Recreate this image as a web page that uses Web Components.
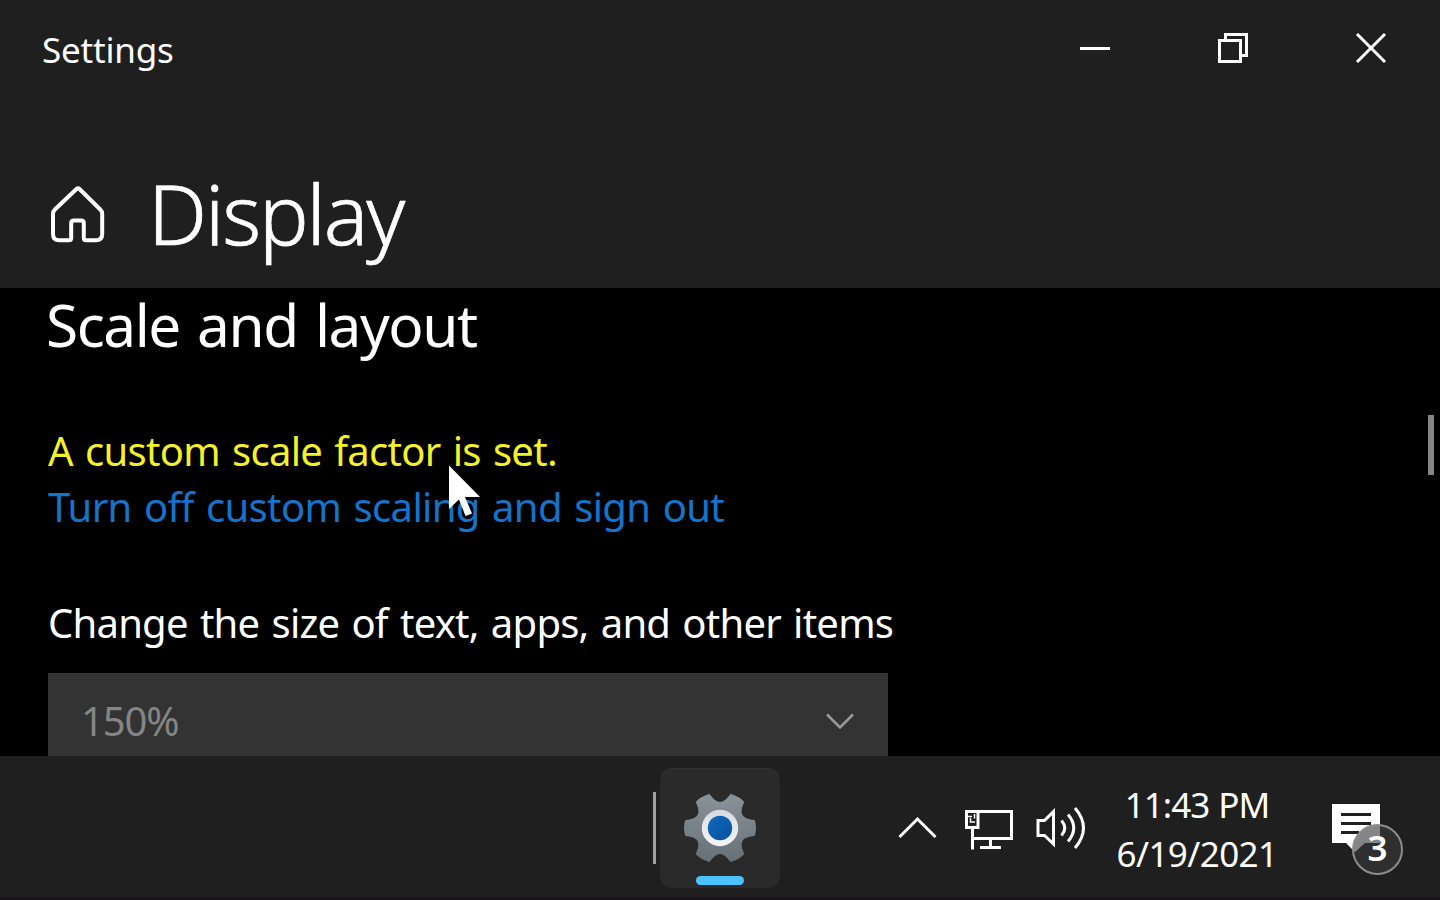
<!DOCTYPE html>
<html lang="en">
<head>
<meta charset="utf-8">
<title>Settings</title>
<style>
    html, body {
        margin: 0;
        height: 100%;
        overflow: hidden;
        background: #000;
    }

    body {
        font-family: "Noto Sans", "Open Sans", sans-serif;
        color: #fff;
        --chrome-color: #1f1f1f;
        --link-color: #1474cc;
        --warn-color: #f5f129;
    }
</style>
</head>
<body>
<settings-window>
    <title-bar slot="title">Settings</title-bar>
    <page-header slot="header">Display</page-header>
    <section-title>Scale and layout</section-title>
    <scale-notice>
        A custom scale factor is set.
        <span slot="link">Turn off custom scaling and sign out</span>
    </scale-notice>
    <select-field value="150%">Change the size of text, apps, and other items</select-field>
    <task-bar slot="taskbar">
        <task-button></task-button>
        <tray-icons slot="tray"></tray-icons>
        <tray-clock slot="tray" time="11:43 PM" date="6/19/2021"></tray-clock>
        <tray-messages slot="tray" count="3"></tray-messages>
    </task-bar>
</settings-window>
<mouse-pointer></mouse-pointer>

<script>
class SettingsWindow extends HTMLElement
{
    constructor()
    {
        super();
        const Shadow = this.attachShadow({mode: "open"});
        Shadow.innerHTML = `
        <slot name="title"></slot>
        <slot name="header"></slot>
        <div class="Content">
            <main><slot></slot></main>
            <div class="Scroll"><div class="Thumb"></div></div>
        </div>
        <slot name="taskbar"></slot>
        <style>
            :host {
                display: flex;
                flex-direction: column;
                width: 1440px;
                height: 900px;
            }

            .Content {
                display: flex;
                height: 468px;
                overflow: hidden;
                background: #000;
            }

            main {
                flex: 1;
                padding: 0 0 0 48px;
            }

            .Scroll {
                width: 12px;
                padding-top: 127px;
            }

            .Thumb {
                width: 6px;
                height: 60px;
                background: #858585;
            }
        </style>
        `;
    }
}

class TitleBar extends HTMLElement
{
    constructor()
    {
        super();
        const Shadow = this.attachShadow({mode: "open"});
        Shadow.innerHTML = `
        <span class="Caption"><slot></slot></span>
        <svg viewBox="0 0 138 96"><path d="M57 48.500h30"/></svg>
        <svg viewBox="0 0 138 96"><path d="M58.500 40.500h21v21h-21zM64.500 40.500v-6h21v21h-6"/></svg>
        <svg viewBox="0 0 138 96"><path d="M58 34l28 28M86 34l-28 28"/></svg>
        <style>
            :host {
                display: flex;
                box-sizing: border-box;
                height: 96px;
                padding-right: 3px;
                background: var(--chrome-color);
            }

            .Caption {
                flex: 1;
                padding: 26px 0 0 42px;
                font-size: 35px;
                line-height: 48px;
                letter-spacing: -.2px;
            }

            svg {
                width: 138px;
                height: 96px;
                fill: none;
                stroke: #fff;
                stroke-width: 3;
            }
        </style>
        `;
    }
}

class PageHeader extends HTMLElement
{
    constructor()
    {
        super();
        const Shadow = this.attachShadow({mode: "open"});
        Shadow.innerHTML = `
        <svg viewBox="0 0 58 60">
            <path d="M26.500 5 4.900 25.500Q3 27.300 3 30V50Q3 56.200 9 56.200H19Q21.200 56.200 21.200 54V39Q21.200 36.500 23.700 36.500H31.300Q33.800 36.500 33.800 39V54Q33.800 56.200 36 56.200H46Q52.200 56.200 52.200 50V30Q52.200 27.300 50.300 25.500L29.500 5Q28 3.500 26.500 5Z"/>
        </svg>
        <h1><slot></slot></h1>
        <style>
            :host {
                display: flex;
                height: 192px;
                background: var(--chrome-color);
            }

            svg {
                width: 58px;
                height: 60px;
                margin: 88px 0 0 50px;
                fill: none;
                stroke: #fff;
                stroke-width: 4;
            }

            h1 {
                margin: 57px 0 0 40px;
                font-size: 83px;
                font-weight: 300;
                line-height: 120px;
                letter-spacing: -2.1px;
                -webkit-text-stroke: .7px #fff;
            }
        </style>
        `;
    }
}

class SectionTitle extends HTMLElement
{
    constructor()
    {
        super();
        const Shadow = this.attachShadow({mode: "open"});
        Shadow.innerHTML = `
        <h2><slot></slot></h2>
        <style>
            :host {
                display: block;
            }

            h2 {
                margin: 0 0 0 -2px;
                font-size: 58.5px;
                font-weight: 400;
                line-height: 72px;
                letter-spacing: -1.45px;
                word-spacing: 3.5px;
            }
        </style>
        `;
    }
}

class ScaleNotice extends HTMLElement
{
    constructor()
    {
        super();
        const Shadow = this.attachShadow({mode: "open"});
        Shadow.innerHTML = `
        <div class="Warn"><slot></slot></div>
        <div class="Link"><slot name="link"></slot></div>
        <style>
            :host {
                display: block;
                padding-top: 63px;
                font-size: 40px;
                line-height: 56px;
                word-spacing: 2.5px;
            }

            .Warn {
                color: var(--warn-color);
                letter-spacing: -.72px;
            }

            .Link {
                color: var(--link-color);
                letter-spacing: -.64px;
            }
        </style>
        `;
    }
}

class SelectField extends HTMLElement
{
    constructor()
    {
        super();
        const Shadow = this.attachShadow({mode: "open"});
        Shadow.innerHTML = `
        <label><slot></slot></label>
        <div class="Box">
            <span class="Value"></span>
            <svg viewBox="0 0 30 18"><path d="M2 2.500 15 15.500 28 2.500"/></svg>
        </div>
        <style>
            :host {
                display: block;
                padding-top: 60px;
                font-size: 40px;
                line-height: 56px;
            }

            label {
                display: block;
                letter-spacing: -.76px;
                word-spacing: 2.5px;
            }

            .Box {
                display: flex;
                align-items: center;
                justify-content: space-between;
                box-sizing: border-box;
                width: 840px;
                height: 96px;
                margin-top: 22px;
                padding: 0 33px;
                background: #333;
                color: #858585;
            }

            .Value {
                letter-spacing: -1.1px;
            }

            svg {
                width: 30px;
                height: 18px;
                fill: none;
                stroke: #999;
                stroke-width: 2.500;
            }
        </style>
        `;
    }

    connectedCallback() {
        this.shadowRoot.querySelector(".Value").textContent = this.getAttribute("value");
    }
}

class TaskBar extends HTMLElement
{
    constructor()
    {
        super();
        const Shadow = this.attachShadow({mode: "open"});
        Shadow.innerHTML = `
        <div class="Apps"><div class="Grip"></div><slot></slot></div>
        <div class="Tray"><slot name="tray"></slot></div>
        <style>
            :host {
                display: flex;
                justify-content: space-between;
                box-sizing: border-box;
                height: 144px;
                border-bottom: 3px solid #191518;
                background: var(--chrome-color);
            }

            .Apps {
                display: flex;
                align-items: flex-start;
                gap: 4px;
                padding: 12px 0 0 653px;
            }

            .Grip {
                width: 3px;
                height: 72px;
                margin-top: 24px;
                background: #a0a0a0;
            }

            .Tray {
                display: flex;
            }
        </style>
        `;
    }
}

class TaskButton extends HTMLElement
{
    constructor()
    {
        super();
        const Shadow = this.attachShadow({mode: "open"});
        Shadow.innerHTML = `
        <svg viewBox="-40 -40 80 80">
            <defs>
                <linearGradient id="Metal" x1="0" y1="0" x2="0" y2="1">
                    <stop offset="0" stop-color="#899299"/>
                    <stop offset="1" stop-color="#687178"/>
                </linearGradient>
                <linearGradient id="Ring" x1="0" y1="0" x2="0" y2="1">
                    <stop offset="0" stop-color="#d7dbe0"/>
                    <stop offset="1" stop-color="#f5f6f8"/>
                </linearGradient>
                <linearGradient id="Hub" x1="0" y1="0" x2="1" y2="1">
                    <stop offset="0" stop-color="#1069bd"/>
                    <stop offset="1" stop-color="#07519c"/>
                </linearGradient>
            </defs>
            <path class="Gear" fill="url(#Metal)" stroke="url(#Metal)"/>
            <circle r="18.200" fill="url(#Ring)"/>
            <circle r="12.200" fill="url(#Hub)"/>
        </svg>
        <div class="Active"></div>
        <style>
            :host {
                display: flex;
                flex-direction: column;
                align-items: center;
                box-sizing: border-box;
                width: 120px;
                height: 120px;
                padding-top: 20px;
                border-radius: 12px;
                border-top: 1px solid #303030;
                background: #2a2a2a;
            }

            svg {
                width: 80px;
                height: 80px;
                margin-top: -1px;
            }

            .Gear {
                stroke-width: 3;
                stroke-linejoin: round;
            }

            .Active {
                width: 48px;
                height: 9px;
                margin-top: 8px;
                border-radius: 5px;
                background: #4cc2ff;
            }
        </style>
        `;
    }

    //one tooth and the valley after it, repeated every 60 degrees
    GearPath() {
        var tooth = [[33.6, -6.6], [35.4, 0], [33.6, 6.6], [20.6, 8], [17.2, 13.8], [22.5, 25.8]];
        var d = "";
        for (var i = 0; i < 6; i++) {
            var c = Math.cos(i * Math.PI / 3);
            var s = Math.sin(i * Math.PI / 3);
            var p = tooth.map(([x, y]) => (x * c - y * s).toFixed(2) + " " + (x * s + y * c).toFixed(2));
            d += (i ? "L" : "M") + p[0] + "Q" + p[1] + " " + p[2] + "C" + p[3] + " " + p[4] + " " + p[5];
        }
        return d + "Z";
    }

    connectedCallback() {
        this.shadowRoot.querySelector(".Gear").setAttribute("d", this.GearPath());
    }
}

class TrayIcons extends HTMLElement
{
    constructor()
    {
        super();
        const Shadow = this.attachShadow({mode: "open"});
        Shadow.innerHTML = `
        <svg class="More" viewBox="0 0 40 24"><path d="M1.500 21 19.500 3 37.500 21"/></svg>
        <svg class="Network" viewBox="0 0 50 42">
            <path d="M13 2.500H47.500V29.500H10M2.500 2.500H14V18.500H2.500ZM8.500 19V40.500M26.500 30V38M16 38.500H37"/>
            <path class="Plug" d="M3 7.500H8M10.500 5V9.500M6.500 9V13H11"/>
        </svg>
        <svg class="Volume" viewBox="0 0 52 46">
            <path d="M3 15.500H9.500L18.500 6.500V39L9.500 30.500H3Z"/>
            <path d="M26.500 15.500Q33 23 26.500 30.500M33 9.500Q44.500 23 33 36.500M40 3Q57 23 40 43"/>
        </svg>
        <style>
            :host {
                display: flex;
                padding-top: 49px;
            }

            svg {
                fill: none;
                stroke: #fff;
                stroke-width: 3;
            }

            .More {
                width: 40px;
                height: 24px;
                margin: 11px 26px 0 0;
            }

            .Network {
                width: 50px;
                height: 42px;
                margin: 4px 21px 0 0;
            }

            .Plug {
                stroke-width: 1.500;
            }

            .Volume {
                width: 52px;
                height: 46px;
            }
        </style>
        `;
    }
}

class TrayClock extends HTMLElement
{
    constructor()
    {
        super();
        const Shadow = this.attachShadow({mode: "open"});
        Shadow.innerHTML = `
        <span class="Time"></span>
        <span class="Date"></span>
        <style>
            :host {
                display: flex;
                flex-direction: column;
                align-items: center;
                width: 180px;
                margin-left: 20px;
                padding-top: 24px;
                font-size: 35px;
                line-height: 49px;
                white-space: nowrap;
            }

            .Time {
                letter-spacing: -1px;
                word-spacing: 1px;
            }

            .Date {
                letter-spacing: -.6px;
            }
        </style>
        `;
    }

    connectedCallback() {
        this.shadowRoot.querySelector(".Time").textContent = this.getAttribute("time");
        this.shadowRoot.querySelector(".Date").textContent = this.getAttribute("date");
    }
}

class TrayMessages extends HTMLElement
{
    constructor()
    {
        super();
        const Shadow = this.attachShadow({mode: "open"});
        Shadow.innerHTML = `
        <svg viewBox="0 0 48 54">
            <path fill="#fff" d="M0 0H48V39H33L23 48 14 39H0Z"/>
            <path stroke="#1f1f1f" stroke-width="3" d="M9 10.500H39M9 19.500H39M9 28.500H27"/>
        </svg>
        <span class="Count"></span>
        <style>
            :host {
                display: block;
                position: relative;
                width: 108px;
                margin-left: 45px;
                margin-top: 48px;
            }

            svg {
                display: block;
                width: 48px;
                height: 54px;
            }

            .Count {
                position: absolute;
                left: 20px;
                top: 20px;
                box-sizing: border-box;
                width: 51px;
                height: 51px;
                border: 2px solid #8d8d8d;
                border-radius: 50%;
                background: rgba(58, 58, 58, .62);
                font-size: 35px;
                font-weight: 600;
                line-height: 44px;
                text-align: center;
            }
        </style>
        `;
    }

    connectedCallback() {
        this.shadowRoot.querySelector(".Count").textContent = this.getAttribute("count");
    }
}

class MousePointer extends HTMLElement
{
    constructor()
    {
        super();
        const Shadow = this.attachShadow({mode: "open"});
        Shadow.innerHTML = `
        <svg width="34" height="54" viewBox="0 0 34 54">
            <path fill="#fff" d="M1 .5V44L11 34.500 17.500 51 24 48.500 17 32H32Z"/>
        </svg>
        <style>
            :host {
                position: absolute;
                left: 448px;
                top: 465px;
            }

            svg {
                display: block;
            }
        </style>
        `;
    }
}

customElements.define("settings-window", SettingsWindow);
customElements.define("title-bar", TitleBar);
customElements.define("page-header", PageHeader);
customElements.define("section-title", SectionTitle);
customElements.define("scale-notice", ScaleNotice);
customElements.define("select-field", SelectField);
customElements.define("task-bar", TaskBar);
customElements.define("task-button", TaskButton);
customElements.define("tray-icons", TrayIcons);
customElements.define("tray-clock", TrayClock);
customElements.define("tray-messages", TrayMessages);
customElements.define("mouse-pointer", MousePointer);
</script>
</body>
</html>
